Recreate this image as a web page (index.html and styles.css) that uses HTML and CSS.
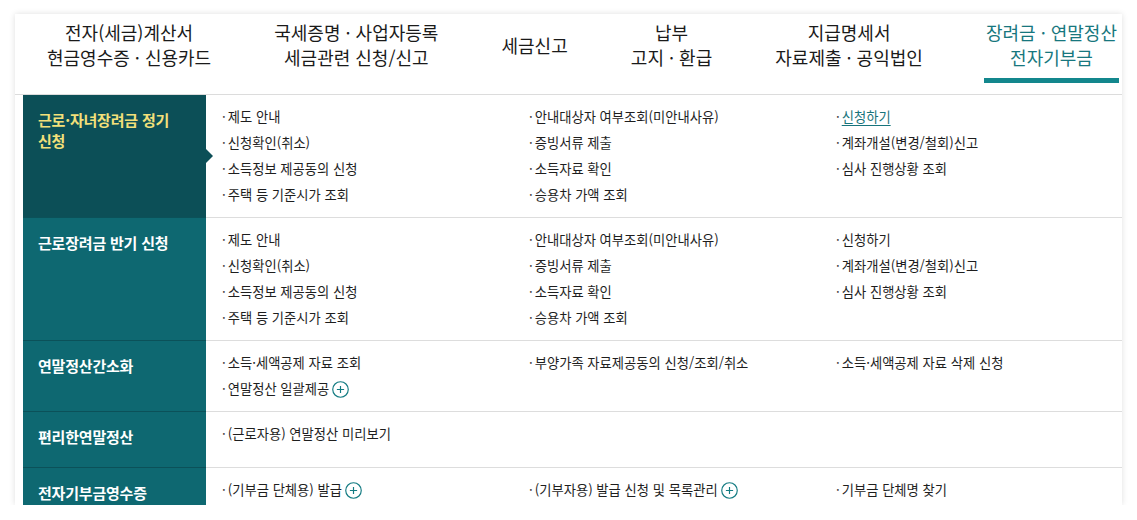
FILE: index.html
```html
<!DOCTYPE html>
<html lang="ko">
<head>
<meta charset="utf-8">
<link rel="stylesheet" href="styles.css">
</head>
<body>
<div class="card">
  <nav class="gnb">
    <a class="gnb-item">전자(세금)계산서<br>현금영수증 · 신용카드</a>
    <a class="gnb-item">국세증명 · 사업자등록<br>세금관련 신청/신고</a>
    <a class="gnb-item">세금신고</a>
    <a class="gnb-item">납부<br>고지 · 환급</a>
    <a class="gnb-item">지급명세서<br>자료제출 · 공익법인</a>
    <a class="gnb-item active">장려금 · 연말정산<br>전자기부금</a>
  </nav>
  <div class="panel">
    <div class="row">
      <div class="label active">근로·자녀장려금 정기<br>신청</div>
      <div class="links">
        <ul class="col">
          <li>제도 안내</li>
          <li>신청확인(취소)</li>
          <li>소득정보 제공동의 신청</li>
          <li>주택 등 기준시가 조회</li>
        </ul>
        <ul class="col">
          <li>안내대상자 여부조회(미안내사유)</li>
          <li>증빙서류 제출</li>
          <li>소득자료 확인</li>
          <li>승용차 가액 조회</li>
        </ul>
        <ul class="col">
          <li><span class="on">신청하기</span></li>
          <li>계좌개설(변경/철회)신고</li>
          <li>심사 진행상황 조회</li>
        </ul>
      </div>
    </div>
    <div class="row">
      <div class="label">근로장려금 반기 신청</div>
      <div class="links">
        <ul class="col">
          <li>제도 안내</li>
          <li>신청확인(취소)</li>
          <li>소득정보 제공동의 신청</li>
          <li>주택 등 기준시가 조회</li>
        </ul>
        <ul class="col">
          <li>안내대상자 여부조회(미안내사유)</li>
          <li>증빙서류 제출</li>
          <li>소득자료 확인</li>
          <li>승용차 가액 조회</li>
        </ul>
        <ul class="col">
          <li>신청하기</li>
          <li>계좌개설(변경/철회)신고</li>
          <li>심사 진행상황 조회</li>
        </ul>
      </div>
    </div>
    <div class="row">
      <div class="label">연말정산간소화</div>
      <div class="links">
        <ul class="col">
          <li>소득·세액공제 자료 조회</li>
          <li>연말정산 일괄제공<span class="plus"><svg viewBox="0 0 16 16" width="17" height="17"><circle cx="8" cy="8" r="7.3" fill="none" stroke="#137b82" stroke-width="1.1"/><path d="M8 4.6v6.8M4.6 8h6.8" stroke="#137b82" stroke-width="1.1"/></svg></span></li>
        </ul>
        <ul class="col">
          <li>부양가족 자료제공동의 신청/조회/취소</li>
        </ul>
        <ul class="col">
          <li>소득·세액공제 자료 삭제 신청</li>
        </ul>
      </div>
    </div>
    <div class="row">
      <div class="label">편리한연말정산</div>
      <div class="links">
        <ul class="col">
          <li>(근로자용) 연말정산 미리보기</li>
        </ul>
      </div>
    </div>
    <div class="row">
      <div class="label">전자기부금영수증</div>
      <div class="links">
        <ul class="col">
          <li>(기부금 단체용) 발급<span class="plus"><svg viewBox="0 0 16 16" width="17" height="17"><circle cx="8" cy="8" r="7.3" fill="none" stroke="#137b82" stroke-width="1.1"/><path d="M8 4.6v6.8M4.6 8h6.8" stroke="#137b82" stroke-width="1.1"/></svg></span></li>
        </ul>
        <ul class="col">
          <li>(기부자용) 발급 신청 및 목록관리<span class="plus"><svg viewBox="0 0 16 16" width="17" height="17"><circle cx="8" cy="8" r="7.3" fill="none" stroke="#137b82" stroke-width="1.1"/><path d="M8 4.6v6.8M4.6 8h6.8" stroke="#137b82" stroke-width="1.1"/></svg></span></li>
        </ul>
        <ul class="col">
          <li>기부금 단체명 찾기</li>
        </ul>
      </div>
    </div>
  </div>
</div>
</body>
</html>
```
FILE: styles.css
```css
* { box-sizing: border-box; }
html, body { margin: 0; padding: 0; background: #fff; }
body {
  font-family: "Noto Sans CJK KR", "Noto Sans", sans-serif;
  color: #222;
}
.card {
  margin: 14px 15px 0 15px;
  height: 491px;
  background: #fff;
  box-shadow: 0 0 6px rgba(0,0,0,0.13);
  overflow: hidden;
}
.gnb {
  display: flex;
  justify-content: space-between;
  height: 81px;
  padding: 6px 3px 0 30px;
  border-bottom: 1px solid #dcdcdc;
}
.gnb-item {
  display: flex;
  align-items: flex-start;
  justify-content: center;
  text-align: center;
  font-size: 18px;
  line-height: 25px;
  letter-spacing: 0;
  color: #1a1a1a;
  padding: 0 2px;
  height: 63px;
}
.gnb-item:nth-child(3) { padding-top: 13px; }
.gnb-item.active {
  color: #17777e;
  border-bottom: 5px solid #13878d;
}
.panel { margin-left: 8px; }
.row {
  display: flex;
  border-bottom: 1px solid #dddddd;
}
.label {
  position: relative;
  flex: 0 0 183px;
  background: #0e6871;
  color: #fff;
  font-weight: bold;
  font-size: 15px;
  line-height: 21px;
  letter-spacing: -0.2px;
  padding: 14px 8px 20px 15px;
  border-bottom: 1px solid #0b5159;
  margin-bottom: -1px;
  white-space: nowrap;
}
.label.active {
  background: #0c4f57;
  color: #f3e07a;
}
.label.active::after {
  content: "";
  position: absolute;
  right: -7px;
  top: 50%;
  margin-top: -7px;
  border-left: 7px solid #0c4f57;
  border-top: 7px solid transparent;
  border-bottom: 7px solid transparent;
}
.links {
  flex: 1;
  display: flex;
  padding: 9px 0 9px 16px;
}
.col {
  list-style: none;
  margin: 0;
  padding: 0;
  width: 307px;
}
.col li {
  font-size: 13.3px;
  line-height: 26px;
  height: 26px;
  letter-spacing: 0;
  color: #1e1e1e;
  display: flex;
  align-items: center;
  white-space: nowrap;
}
.col li::before {
  content: "·";
  margin-right: 2px;
  color: #444;
}
.on {
  color: #17747b;
  text-decoration: underline;
  text-underline-offset: 3px;
}
.plus {
  display: inline-flex;
  margin-left: 3px;
}
```
